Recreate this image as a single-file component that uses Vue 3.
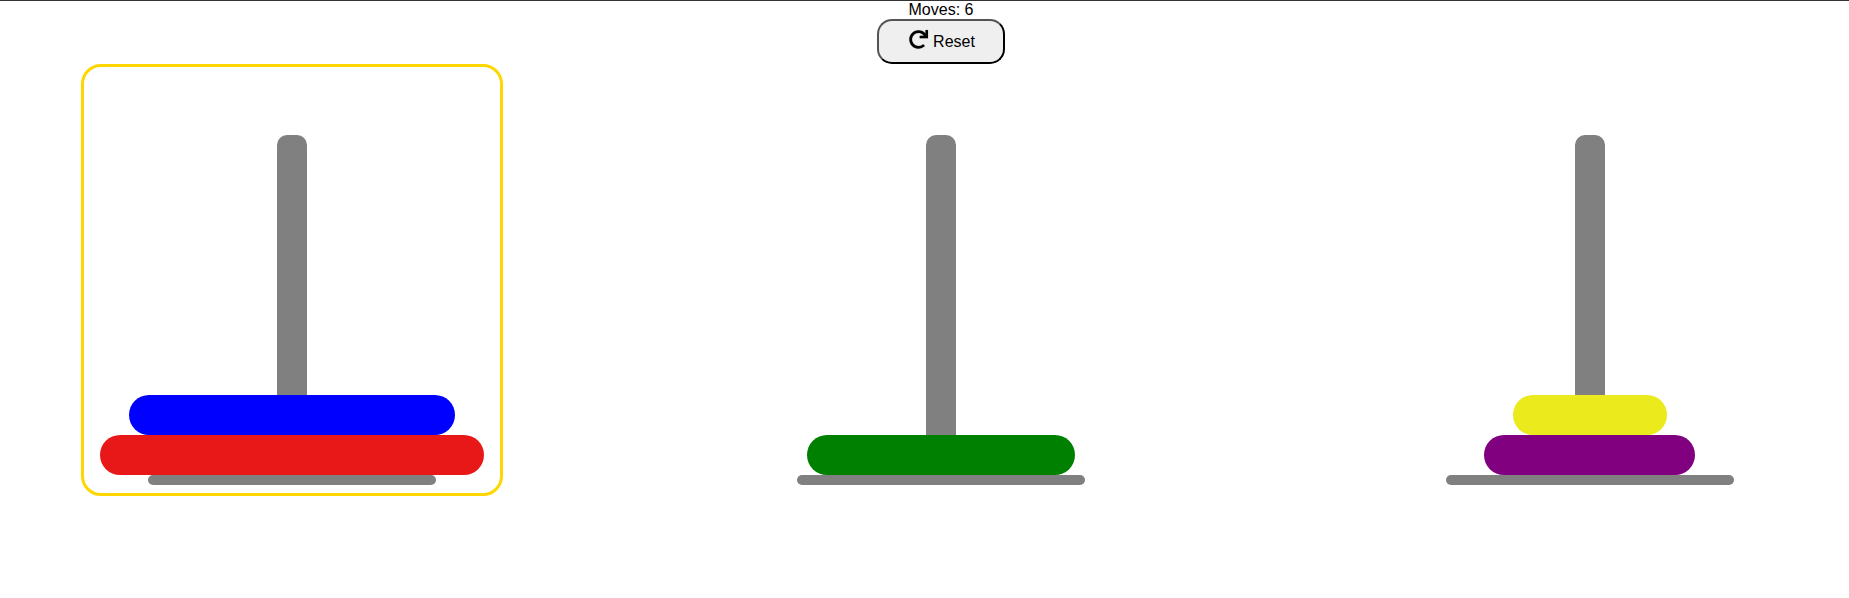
<script setup>
const towers = [
  { id: 1, selected: true, disks: [{ w: 326, c: '#0000ff' }, { w: 384, c: '#e81818' }] },
  { id: 2, selected: false, disks: [{ w: 268, c: '#008000' }] },
  { id: 3, selected: false, disks: [{ w: 154, c: '#eaea1c' }, { w: 211, c: '#800080' }] },
]
</script>

<template>
  <div class="page">
    <div class="moves">Moves: 6</div>
    <button class="reset" type="button">
      <svg class="icon" viewBox="0 0 512 512" aria-hidden="true">
        <path fill="currentColor" stroke="currentColor" stroke-width="4" d="M500.33 0h-47.41a12 12 0 0 0-12 12.57l4 82.76A247.42 247.42 0 0 0 256 8C119.34 8 7.9 119.53 8 256.19 8.1 393.07 119.1 504 256 504a247.1 247.1 0 0 0 166.18-63.91 12 12 0 0 0 .48-17.43l-34-34a12 12 0 0 0-16.38-.55A176 176 0 1 1 402.1 157.8l-101.53-4.87a12 12 0 0 0-12.57 12v47.41a12 12 0 0 0 12 12h200.33a12 12 0 0 0 12-12V12a12 12 0 0 0-12-12z" />
      </svg>
      <span>Reset</span>
    </button>
    <div class="towers">
      <div v-for="t in towers" :key="t.id" class="tower" :class="{ selected: t.selected }">
        <div class="pole"></div>
        <div class="stack">
          <div v-for="d in t.disks" :key="d.c" class="disk" :style="{ width: d.w + 'px', background: d.c }"></div>
        </div>
        <div class="base"></div>
      </div>
    </div>
  </div>
</template>

<style>
html, body {
  overflow: hidden;
}
</style>

<style scoped>
.page {
  width: 1882px;
  height: 598px;
  box-sizing: border-box;
  border-top: 1px solid #333;
  display: flex;
  flex-direction: column;
  align-items: center;
  font-family: "Liberation Sans", Arial, sans-serif;
  font-size: 16px;
  color: #000;
}
.moves {
  line-height: 18px;
}
.reset {
  width: 128px;
  height: 45px;
  box-sizing: border-box;
  border: 2px outset #000;
  border-radius: 15px;
  background: #efefef;
  color: #000;
  font-family: inherit;
  font-size: 16px;
  display: flex;
  align-items: center;
  justify-content: center;
  gap: 5px;
  padding: 0 0 0 2px;
}
.icon {
  width: 19px;
  height: 19px;
  margin-top: -4px;
  overflow: visible;
}
.towers {
  align-self: stretch;
  display: flex;
  justify-content: space-between;
  padding: 0 81.2px 0 81px;
}
.tower {
  width: 422px;
  height: 432px;
  box-sizing: border-box;
  border: 3px solid transparent;
  border-radius: 20px;
  padding-top: 68px;
  display: flex;
  flex-direction: column;
  align-items: center;
  position: relative;
}
.tower.selected {
  border-color: #ffd700;
}
.pole {
  position: absolute;
  top: 68px;
  width: 30px;
  height: 340px;
  background: #808080;
  border-radius: 10px 10px 0 0;
}
.stack {
  flex: 1;
  width: 100%;
  min-height: 0;
  display: flex;
  flex-direction: column;
  justify-content: flex-end;
  align-items: center;
  position: relative;
}
.disk {
  height: 40px;
  border-radius: 20px;
  flex: none;
}
.base {
  width: 288px;
  height: 10px;
  background: #808080;
  border-radius: 5px;
  flex: none;
  margin-bottom: 8px;
}
</style>
